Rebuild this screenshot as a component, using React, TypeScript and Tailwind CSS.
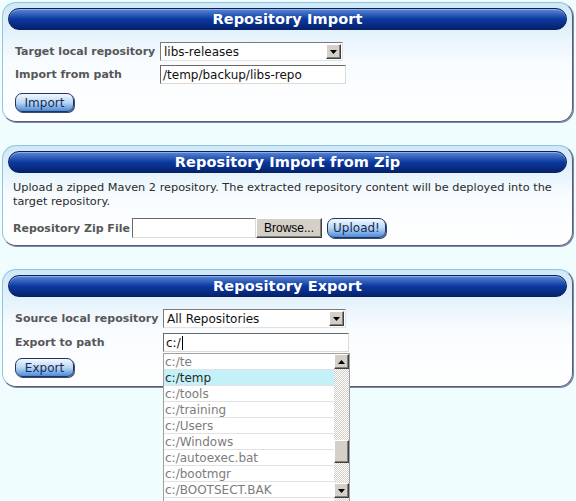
import React from "react";

const font = "font-['DejaVu_Sans','Verdana',sans-serif]";

function Header({ title }: { title: string }) {
  return (
    <div className="h-[22px] rounded-[11px] border border-[#0a1f5e] bg-gradient-to-b from-[#5a88d8] via-[#0d3aa0] to-[#04226f] flex items-center justify-center shadow-[inset_0_1px_0_rgba(255,255,255,0.35)]">
      <span className="text-white font-bold text-[14.5px] leading-none tracking-[0.1px]">{title}</span>
    </div>
  );
}

function Panel({ children, className = "" }: { children: React.ReactNode; className?: string }) {
  return (
    <div
      className={
        "rounded-[14px] border border-[#93c3e2] border-b-[#555f80] border-r-[#555f80] shadow-[1px_1px_0_#7e86a2] bg-gradient-to-b from-[#cfe8f6] via-[#f8fcff] to-white p-[5px] " +
        className
      }
    >
      {children}
    </div>
  );
}

function Label({ children, w }: { children: React.ReactNode; w: string }) {
  return (
    <div className={"text-[11px] font-bold text-[#575757] leading-none shrink-0 " + w}>{children}</div>
  );
}

function Triangle({ up = false }: { up?: boolean }) {
  return (
    <svg width="7" height="4" viewBox="0 0 7 4">
      {up ? <polygon points="0,4 7,4 3.5,0" fill="#000" /> : <polygon points="0,0 7,0 3.5,4" fill="#000" />}
    </svg>
  );
}

function ArrowBtn({ up = false, className = "" }: { up?: boolean; className?: string }) {
  return (
    <div
      className={
        "w-[15px] h-[15px] bg-[#d4d0c8] border border-t-white border-l-white border-b-[#404040] border-r-[#404040] flex items-center justify-center shadow-[inset_-1px_-1px_0_#808080] " +
        className
      }
    >
      <Triangle up={up} />
    </div>
  );
}

function Select({ value, w }: { value: string; w: string }) {
  return (
    <div
      className={
        "h-[19px] bg-white border border-t-[#7a7a7a] border-l-[#7a7a7a] border-b-[#e4e2dc] border-r-[#e4e2dc] flex items-center pl-[3px] pr-[1px] " +
        w
      }
    >
      <span className="flex-1 text-[12px] text-[#111] leading-none">{value}</span>
      <ArrowBtn />
    </div>
  );
}

function TextInput({ value, w, children }: { value?: string; w: string; children?: React.ReactNode }) {
  return (
    <div
      className={
        "h-[19px] bg-white border border-t-[#6a6a6a] border-l-[#6a6a6a] border-b-[#dcdad4] border-r-[#dcdad4] flex items-center pl-[2px] " +
        w
      }
    >
      <span className="text-[12px] text-[#111] leading-none">{value}</span>
      {children}
    </div>
  );
}

function BlueButton({ children, w }: { children: React.ReactNode; w: string }) {
  return (
    <div
      className={
        "h-[19px] rounded-[7px] border border-[#1f3566] bg-gradient-to-b from-[#f4f9ff] via-[#b9d7f3] to-[#4b8bd6] flex items-center justify-center shadow-[1px_1px_0_#3a4a70] " +
        w
      }
    >
      <span className="text-[12px] text-[#1b2a58] leading-none">{children}</span>
    </div>
  );
}

const items = [
  "c:/te",
  "c:/temp",
  "c:/tools",
  "c:/training",
  "c:/Users",
  "c:/Windows",
  "c:/autoexec.bat",
  "c:/bootmgr",
  "c:/BOOTSECT.BAK",
];

function Dropdown() {
  return (
    <div className="absolute left-0 top-[20px] w-[187px] h-[150px] bg-white border border-[#a0a0a0] flex z-10 overflow-hidden">
      <div className="flex-1 flex flex-col">
        {items.map((it, i) => (
          <div
            key={it}
            className={
              "h-[16px] shrink-0 border-b border-[#e2e2e2] flex items-center pl-[1px] text-[12px] leading-none " +
              (i === 1 ? "bg-[#c4f0f8] text-[#2a2a2a]" : "text-[#7c7c7c]")
            }
          >
            {it}
          </div>
        ))}
      </div>
      <div className="w-[15px] shrink-0 flex flex-col bg-[repeating-conic-gradient(#d4d0c8_0%_25%,#ffffff_0%_50%)] bg-[length:2px_2px]">
        <ArrowBtn up />
        <div className="h-[71px]" />
        <div className="w-[15px] h-[23px] bg-[#d4d0c8] border border-t-white border-l-white border-b-[#404040] border-r-[#404040] shadow-[inset_-1px_-1px_0_#808080]" />
        <div className="h-[20px]" />
        <ArrowBtn />
      </div>
    </div>
  );
}

export default function App() {
  return (
    <div className={"min-h-[501px] w-[576px] bg-[#effdff] pt-[2px] pl-[2px] pr-[3px] overflow-hidden " + font}>
      <Panel>
        <Header title="Repository Import" />
        <div className="px-[7px] pt-[12px] pb-[4px] flex flex-col">
          <div className="flex items-center">
            <Label w="w-[145px]">Target local repository</Label>
            <Select value="libs-releases" w="w-[183px]" />
          </div>
          <div className="flex items-center mt-[4px]">
            <Label w="w-[145px]">Import from path</Label>
            <TextInput value="/temp/backup/libs-repo" w="w-[186px]" />
          </div>
          <div className="mt-[9px]">
            <BlueButton w="w-[59px]">Import</BlueButton>
          </div>
        </div>
      </Panel>

      <Panel className="mt-[23px]">
        <Header title="Repository Import from Zip" />
        <div className="px-[5px] pt-[8px] pb-[2px]">
          <p className="text-[11.3px] leading-[14px] text-[#2a2a2a] whitespace-nowrap">
            Upload a zipped Maven 2 repository. The extracted repository content will be deployed into the
            <br />
            target repository.
          </p>
          <div className="flex items-center mt-[9px]">
            <div className="text-[11px] font-bold text-[#575757] leading-none w-[119px] shrink-0">Repository Zip File</div>
            <div className="h-[20px] w-[124px] bg-white border border-t-[#6a6a6a] border-l-[#6a6a6a] border-b-[#dcdad4] border-r-[#dcdad4]" />
            <div className="h-[20px] w-[66px] bg-[#d4d0c8] border border-t-white border-l-white border-b-[#404040] border-r-[#404040] shadow-[inset_-1px_-1px_0_#808080] flex items-center justify-center">
              <span className="text-[12px] text-black leading-none font-['Liberation_Sans',Arial,sans-serif]">Browse...</span>
            </div>
            <div className="ml-[5px]">
              <div className="h-[20px] w-[59px] rounded-[7px] border border-[#1f3566] bg-gradient-to-b from-[#f4f9ff] via-[#b9d7f3] to-[#4b8bd6] flex items-center justify-center shadow-[1px_1px_0_#3a4a70]">
                <span className="text-[12px] text-[#1b2a58] leading-none">Upload!</span>
              </div>
            </div>
          </div>
        </div>
      </Panel>

      <Panel className="mt-[23px]">
        <Header title="Repository Export" />
        <div className="px-[7px] pt-[12px] pb-[4px] flex flex-col">
          <div className="flex items-center">
            <Label w="w-[148px]">Source local repository</Label>
            <Select value="All Repositories" w="w-[183px]" />
          </div>
          <div className="flex items-center mt-[5px]">
            <Label w="w-[148px]">Export to path</Label>
            <div className="relative">
              <TextInput value="c:/" w="w-[186px]">
                <span className="inline-block w-[1px] h-[14px] bg-black ml-[1px]" />
              </TextInput>
              <Dropdown />
            </div>
          </div>
          <div className="mt-[6px]">
            <BlueButton w="w-[59px]">Export</BlueButton>
          </div>
        </div>
      </Panel>
    </div>
  );
}
